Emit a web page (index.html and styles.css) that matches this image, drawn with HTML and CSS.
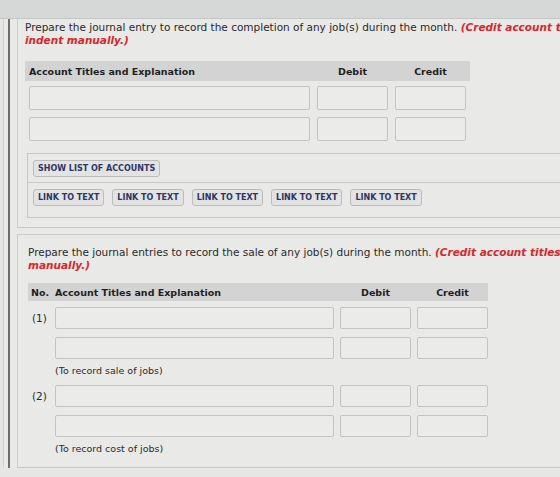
FILE: index.html
```html
<!DOCTYPE html>
<html lang="en">

<head>
    <meta charset="UTF-8">
    <meta name="viewport" content="width=device-width, initial-scale=1.0">
    <title>Journal entries</title>
    <link rel="stylesheet" href="styles.css">
</head>

<body>
    <div class="topbar"></div>
    <div class="frame">
        <div class="sheet">
            <section class="part part-first">
                <p class="q">Prepare the journal entry to record the completion of any job(s) during the month. <em class="note">(Credit account titles are automatically indented when amount is entered. Do not<br>indent manually.)</em></p>
                <div class="journal">
                    <div class="jhead">
                        <span>Account Titles and Explanation</span>
                        <span class="num">Debit</span>
                        <span class="num">Credit</span>
                    </div>
                    <div class="jrows">
                        <div class="jrow"><input type="text"><input type="text"><input type="text"></div>
                        <div class="jrow"><input type="text"><input type="text"><input type="text"></div>
                    </div>
                </div>
                <div class="tools">
                    <div class="tools-top">
                        <button>SHOW LIST OF ACCOUNTS</button>
                    </div>
                    <div class="tools-links">
                        <button>LINK TO TEXT</button>
                        <button>LINK TO TEXT</button>
                        <button>LINK TO TEXT</button>
                        <button>LINK TO TEXT</button>
                        <button>LINK TO TEXT</button>
                    </div>
                </div>
            </section>

            <section class="part part-second">
                <p class="q">Prepare the journal entries to record the sale of any job(s) during the month. <em class="note">(Credit account titles are automatically indented when amount is entered. Do not indent<br>manually.)</em></p>
                <div class="nhead">
                    <span class="no">No.</span>
                    <span>Account Titles and Explanation</span>
                    <span class="num">Debit</span>
                    <span class="num">Credit</span>
                </div>
                <div class="entry">
                    <span class="lbl">(1)</span>
                    <input type="text"><input type="text"><input type="text">
                    <input type="text" class="skip"><input type="text"><input type="text">
                    <span class="memo">(To record sale of jobs)</span>
                </div>
                <div class="entry">
                    <span class="lbl">(2)</span>
                    <input type="text"><input type="text"><input type="text">
                    <input type="text" class="skip"><input type="text"><input type="text">
                    <span class="memo">(To record cost of jobs)</span>
                </div>
            </section>
        </div>
    </div>
</body>

</html>
```

FILE: styles.css
```css
* {
    box-sizing: border-box;
    padding: 0;
    margin: 0;
}

html,
body {
    height: 100%;
}

body {
    background-color: #e6e6e4;
    font-family: "DejaVu Sans", Verdana, sans-serif;
    color: #2a2a2a;
    overflow: hidden;
}

.topbar {
    height: 19px;
    background-color: #d6d7d7;
    border-bottom: 1px solid #c5c6c6;
}

.frame {
    margin-left: 3px;
    border-left: 1px solid #d2d2d2;
    padding-left: 4px;
    background-color: #e9e9e7;
}

.sheet {
    width: 640px;
    border-left: 2px solid #6e6e6e;
    padding-left: 7px;
}

.part {
    border-left: 1px solid #cdcdcd;
    border-bottom: 1px solid #c8c8c8;
}

.part-first {
    padding: 2px 0 9px 7px;
}

.part-second {
    margin-top: 6px;
    border-top: 1px solid #cdcdcd;
    padding: 11px 0 12px 10px;
}

.q {
    font-size: 10.5px;
    line-height: 13px;
    white-space: nowrap;
}

.note {
    color: #d8272b;
    font-weight: bold;
}

.journal {
    margin-top: 14px;
}

.jhead,
.jrow {
    display: grid;
    grid-template-columns: 281px 71px 71px;
    column-gap: 7px;
    width: 445px;
    padding: 0 4px;
}

.jhead,
.nhead {
    align-items: center;
    background-color: #d3d3d3;
    font-size: 9.5px;
    font-weight: bold;
    color: #1f1f1f;
}

.jhead {
    height: 20px;
}

.num {
    text-align: center;
}

.jrows {
    display: flex;
    flex-direction: column;
    gap: 7px;
    padding-top: 5px;
}

input {
    display: block;
    height: 24px;
    border: 1px solid #c3c3c3;
    border-radius: 2px;
    background-color: #ebebe9;
}

.tools {
    margin: 12px 0 0 2px;
    border: 1px solid #c6c6c6;
    border-right: none;
}

.tools-top {
    display: flex;
    padding: 6px 5px 5px;
    border-bottom: 1px solid #c9c9c9;
}

.tools-links {
    display: flex;
    gap: 8px;
    padding: 6px 5px 11px;
}

button {
    height: 17px;
    padding: 0 4px;
    border: 1px solid #bcbcbc;
    border-radius: 3px;
    background-color: #e3e3e3;
    font-family: "DejaVu Sans", Verdana, sans-serif;
    font-size: 8px;
    font-weight: bold;
    color: #2c3566;
}

.nhead,
.entry {
    display: grid;
    grid-template-columns: 21px 279px 71px 71px;
    column-gap: 6px;
}

.nhead {
    width: 460px;
    height: 18px;
    margin-top: 11px;
}

.no {
    padding-left: 3px;
}

.entry {
    row-gap: 8px;
    margin-top: 6px;
}

.entry + .entry {
    margin-top: 8px;
}

.entry input {
    height: 22px;
}

.lbl {
    align-self: center;
    padding-left: 4px;
    font-size: 10.5px;
}

.skip {
    grid-column-start: 2;
}

.memo {
    grid-column: 2 / 5;
    margin-top: -2px;
    font-size: 9.5px;
    line-height: 12px;
}
```
